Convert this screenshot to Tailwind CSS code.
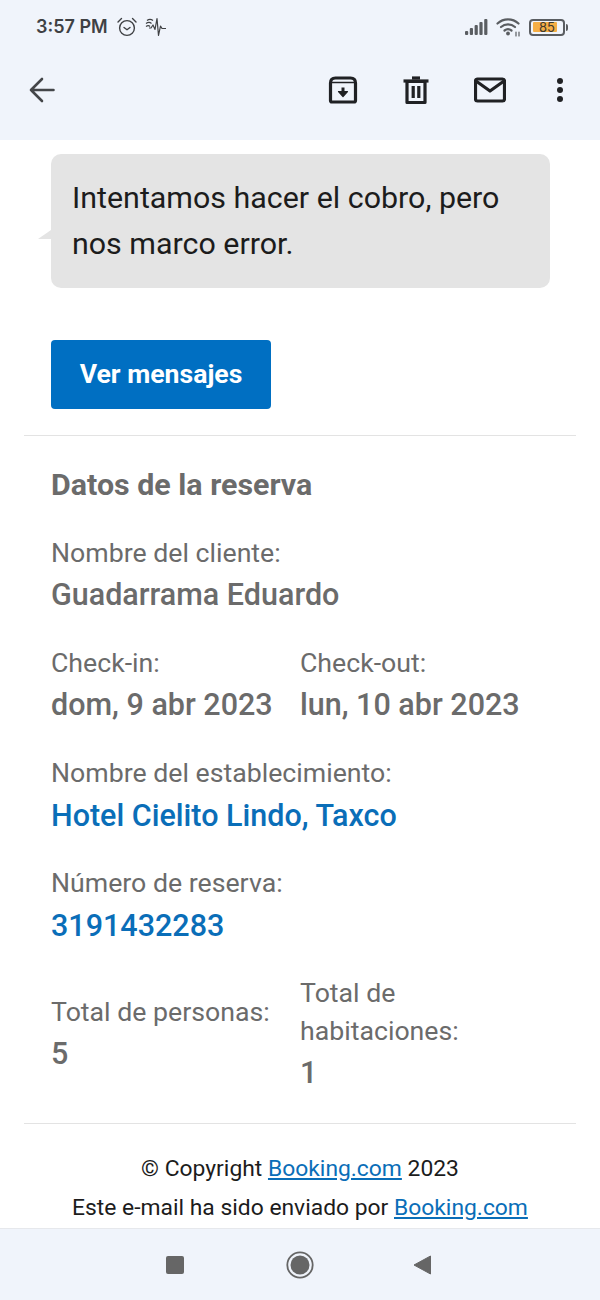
<!DOCTYPE html>
<html lang="es">
<head>
    <meta charset="UTF-8">
    <meta name="viewport" content="width=device-width, initial-scale=1.0">
    <title>Datos de la reserva</title>
    <script src="https://cdn.jsdelivr.net/npm/@tailwindcss/browser@4"></script>
</head>
<body class="bg-white font-['Roboto',sans-serif] w-[600px] h-[1300px] overflow-hidden flex flex-col">
    <!-- status bar + toolbar -->
    <header class="h-[140px] shrink-0 bg-[#f0f4fb]">
        <div class="h-[54px] pl-[36px] pr-[32px] flex items-center text-[#3f4144]">
            <span class="font-['Inter',sans-serif] font-semibold text-[18px] leading-none w-[72px] whitespace-nowrap">3:57 PM</span>
            <svg class="ml-[8px]" width="22" height="22" viewBox="0 0 22 22" fill="none" stroke="#3f4144" stroke-width="1.4" stroke-linecap="round" stroke-linejoin="round">
                <circle cx="11" cy="12" r="7.4"/><path d="M8 11.5l3 2.2 3-2.2"/><path d="M2 6l3.5-3.5M20 6l-3.5-3.5"/>
            </svg>
            <svg class="ml-[7px]" width="24" height="22" viewBox="0 0 24 22" fill="none" stroke="#3f4144" stroke-width="1.2" stroke-linejoin="round">
                <path d="M4 12h2l2-3 2 4.500 2-11 1.500 17 2-9.500 1.500 2.500h4"/><path d="M1 7.500c2-1.500 4-1.500 5.500 0M2 4.500c2-1.500 4-1.500 6 0M1 10.500c1.500-1 3-1 4 0"/>
            </svg>
            <div class="ml-auto flex items-center">
                <svg width="23" height="18" viewBox="0 0 23 18" fill="#5a5d61"><rect x="0" y="13" width="3.200" height="4" rx="1"/><rect x="4.800" y="10" width="3.200" height="7" rx="1"/><rect x="9.600" y="7" width="3.200" height="10" rx="1"/><rect x="14.400" y="4" width="3.200" height="13" rx="1"/><rect x="19.200" y="1" width="3.200" height="16" rx="1"/></svg>
                <svg class="ml-[8px]" width="25" height="20" viewBox="0 0 25 20" fill="none" stroke="#5a5d61" stroke-width="2.200" stroke-linecap="round"><path d="M1.500 6.500c6-5.500 15-5.500 21 0"/><path d="M5 10c4-3.500 10-3.500 14 0"/><path d="M8.500 13.500c2-1.500 5-1.500 7 0"/><circle cx="12" cy="16.500" r="1.900" fill="#5a5d61" stroke="none"/><path d="M20 15v4M23 15v4" stroke-width="1.200"/></svg>
                <div class="ml-[8px] relative w-[36px] h-[17px] rounded-[4px] border-2 border-[#5a5d61] flex items-center">
                    <div class="ml-[2px] w-[24px] h-[10px] bg-[#f5ae45] rounded-[1px]"></div>
                    <span class="absolute inset-0 flex items-center justify-center font-['Inter',sans-serif] text-[13px] leading-none text-[#3f3a30]">85</span>
                </div>
                <div class="ml-[1px] w-[2px] h-[7px] bg-[#5a5d61] rounded-r-sm"></div>
            </div>
        </div>
        <div class="h-[72px] pl-[28px] pr-[35px] flex items-center">
            <svg width="28" height="28" viewBox="0 0 28 28" fill="none" stroke="#444649" stroke-width="2.600" stroke-linecap="round" stroke-linejoin="round"><path d="M25.500 14H3M14 3L3 14l11 11"/></svg>
            <div class="ml-auto flex items-center">
                <svg width="30" height="30" viewBox="0 0 30 30" fill="none" stroke="#202124" stroke-width="3.200" stroke-linejoin="round"><path d="M2.500 8c0-3.500 1.500-5 5-5h15c3.500 0 5 1.500 5 5v17.500c0 1-.5 1.500-1.500 1.500h-22c-1 0-1.500-.5-1.500-1.500z"/><path d="M2.500 7.500h25" stroke-width="1.500"/><path d="M15 12.500v5" stroke-width="3"/><path d="M10.500 16.500h9L15 21.500z" fill="#202124" stroke-width="1.200"/></svg>
                <svg class="ml-[45px]" width="26" height="30" viewBox="0 0 26 30" fill="none" stroke="#202124" stroke-width="3.200" stroke-linejoin="round"><path d="M4 6.500h18V27.500H4z"/><path d="M.5 6h25" /><path d="M9 3h8" /><path d="M10.200 11v12M15.800 11v12"/></svg>
                <svg class="ml-[45px]" width="32" height="26" viewBox="0 0 32 26" fill="none" stroke="#202124" stroke-width="3.200" stroke-linejoin="round"><rect x="1.500" y="2" width="29" height="22" rx="2"/><path d="M2 4l14 10L30 4"/></svg>
                <svg class="ml-[49px]" width="10" height="26" viewBox="0 0 10 26" fill="#202124"><circle cx="5" cy="4" r="3"/><circle cx="5" cy="13" r="3"/><circle cx="5" cy="22" r="3"/></svg>
            </div>
        </div>
    </header>

    <!-- mail body -->
    <main class="flex-1 min-h-0 px-[24px] overflow-hidden">
        <div class="px-[27px] pt-[14px]">
            <div class="relative bg-[#e4e4e4] rounded-[10px] w-[499px] h-[134px] pl-[21px] pt-[21px] text-[30.400px] leading-[46px] text-[#1c1c1c]">
                <p class="whitespace-nowrap">Intentamos hacer el cobro, pero<br>nos marco error.</p>
                <div class="absolute -left-[13px] top-[76px] w-0 h-0 border-b-[9px] border-b-[#e4e4e4] border-l-[13px] border-l-transparent"></div>
            </div>
            <a class="mt-[52px] w-[220px] h-[69px] pb-[2px] rounded-[4px] bg-[#006fc2] text-white font-bold text-[26.600px] flex items-center justify-center">Ver mensajes</a>
        </div>
        <div class="mt-[26px] border-t border-[#e3e3e3] px-[27px] pt-[29px] text-[#6b6b6b]">
            <h2 class="font-bold text-[30.400px] leading-[40px]">Datos de la reserva</h2>
            <div class="mt-[28px] text-[26.700px] leading-[41px]">Nombre del cliente:</div>
            <div class="font-medium text-[30.500px] leading-[42px]">Guadarrama Eduardo</div>
            <div class="mt-[26px] grid grid-cols-[249px_1fr]">
                <div>
                    <div class="text-[26.700px] leading-[42px]">Check-in:</div>
                    <div class="font-medium text-[30.500px] leading-[42px] whitespace-nowrap">dom, 9 abr 2023</div>
                </div>
                <div>
                    <div class="text-[26.700px] leading-[42px]">Check-out:</div>
                    <div class="font-medium text-[30.500px] leading-[42px] whitespace-nowrap">lun, 10 abr 2023</div>
                </div>
            </div>
            <div class="mt-[26px] text-[26.700px] leading-[43px]">Nombre del establecimiento:</div>
            <div class="font-medium text-[30.500px] leading-[42px] text-[#0a6eb8]">Hotel Cielito Lindo, Taxco</div>
            <div class="mt-[25px] text-[26.700px] leading-[43px]">Número de reserva:</div>
            <div class="font-medium text-[30.500px] leading-[42px] text-[#0a6eb8]">3191432283</div>
            <div class="mt-[27px] grid grid-cols-[249px_1fr] items-start">
                <div class="pt-[18px]">
                    <div class="text-[26.700px] leading-[40px]">Total de personas:</div>
                    <div class="mt-[1px] font-medium text-[30.500px] leading-[42px]">5</div>
                </div>
                <div>
                    <div class="text-[26.700px] leading-[38px]">Total de<br>habitaciones:</div>
                    <div class="mt-[2px] font-medium text-[30.500px] leading-[42px]">1</div>
                </div>
            </div>
        </div>
        <div class="mt-[29px] border-t border-[#e3e3e3] pt-[25px] text-center text-[#1c1c1c] text-[22.850px] leading-[39px]">
            <p>© Copyright <a class="underline text-[#0a6eb8]">Booking.com</a> 2023</p>
            <p class="whitespace-nowrap">Este e-mail ha sido enviado por <a class="underline text-[#0a6eb8]">Booking.com</a></p>
        </div>
    </main>

    <!-- android nav bar -->
    <nav class="h-[72px] shrink-0 bg-[#f0f4fb] border-t border-[#e6e8ec] flex items-center">
        <div class="ml-[166px] w-[18px] h-[18px] bg-[#666666] rounded-[2px]"></div>
        <svg class="ml-[102px]" width="28" height="28" viewBox="0 0 28 28"><circle cx="14" cy="14" r="12.700" fill="none" stroke="#666666" stroke-width="1.800"/><circle cx="14" cy="14" r="9.500" fill="#666666"/></svg>
        <svg class="ml-[99px]" width="18" height="20" viewBox="0 0 18 20" fill="#666666"><path d="M17.500 1v18L1 10z" stroke="#666666" stroke-linejoin="round"/></svg>
    </nav>
</body>
</html>
